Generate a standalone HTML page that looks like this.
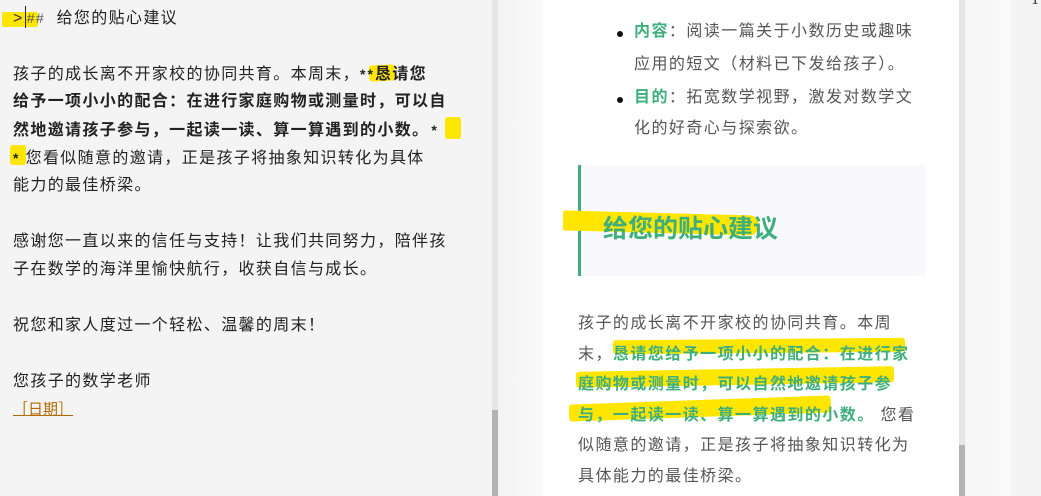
<!DOCTYPE html>
<html><head><meta charset="utf-8"><style>
*{margin:0;padding:0;box-sizing:border-box}
body{width:1041px;height:496px;overflow:hidden;position:relative;background:#f4f4f4;font-family:"Liberation Sans","Noto Sans CJK SC",sans-serif}
.hl{position:absolute;background:#ffe600;border-radius:3px}
#left{position:absolute;left:0;top:0;width:492px;height:496px;background:#f4f4f4;color:#222;font-size:16px;line-height:28px;padding:4px 0 0 13px;letter-spacing:1.35px}
#left .line{height:28px;white-space:nowrap;position:relative}
#left b{font-weight:bold;position:relative}
.sb1{position:absolute;left:492px;top:0;width:6px;height:496px;background:#e6e6e6}
.sb1 i{position:absolute;left:0;top:410px;width:6px;height:86px;background:#b3b3b3}
.gut{position:absolute;left:498px;top:0;width:45px;height:496px;background:linear-gradient(90deg,#f3f3f3,#fafafa)}
#page{position:absolute;left:543px;top:0;width:416px;height:496px;background:#fff;color:#555;font-size:16px;letter-spacing:1.45px}
.sb2{position:absolute;left:959px;top:0;width:6px;height:496px;background:#e6e6e6}
.sb2 i{position:absolute;left:0;top:445px;width:6px;height:51px;background:#b3b3b3}
.gut2{position:absolute;left:965px;top:0;width:46px;height:496px;background:linear-gradient(90deg,#f5f5f5,#fafafa)}
.g{color:#3eaf7c;font-weight:bold}
.li{position:absolute;left:91px;white-space:nowrap;line-height:33px}
.dot{position:absolute;left:74px;width:6px;height:6px;border-radius:50%;background:#111}
</style></head><body>
<div id="left">
 <div class="line"><span class="hl" style="left:-11px;top:8px;width:36px;height:15px;border-radius:2px"></span><span style="position:relative;color:#333">&gt;</span><span style="position:relative;display:inline-block;width:1px;height:22px;background:#222;vertical-align:-5px;margin:0 1px"></span><span style="position:relative;color:#555;font-size:14px">##</span>&nbsp; 给您的贴心建议</div>
 <div class="line"></div>
 <div class="line">孩子的成长离不开家校的协同共育。本周末，<span class="hl" style="left:356px;top:5px;width:26px;height:16px;transform:rotate(-3deg)"></span><span style="position:relative;font-size:14px;font-weight:bold;letter-spacing:2px">**</span><b>恳请您</b></div>
 <div class="line"><b>给予一项小小的配合：在进行家庭购物或测量时，可以自</b></div>
 <div class="line"><b>然地邀请孩子参与，一起读一读、算一算遇到的小数。</b><span class="hl" style="left:432px;top:1px;width:16px;height:22px"></span><span style="position:relative;font-size:14px;font-weight:bold;margin-left:2px">*</span></div>
 <div class="line"><span class="hl" style="left:-3px;top:1px;width:16px;height:20px"></span><span style="position:relative;font-size:14px;font-weight:bold">*</span> 您看似随意的邀请，正是孩子将抽象知识转化为具体</div>
 <div class="line">能力的最佳桥梁。</div>
 <div class="line"></div>
 <div class="line">感谢您一直以来的信任与支持！让我们共同努力，陪伴孩</div>
 <div class="line">子在数学的海洋里愉快航行，收获自信与成长。</div>
 <div class="line"></div>
 <div class="line">祝您和家人度过一个轻松、温馨的周末！</div>
 <div class="line"></div>
 <div class="line">您孩子的数学老师</div>
 <div class="line" style="color:#b36b00;font-size:15px;letter-spacing:0"><span style="text-decoration:underline">［日期］</span></div>
</div>
<div class="sb1"><i></i></div>
<div class="gut"></div>
<div id="page">
 <div class="dot" style="top:31px"></div>
 <div class="li" style="top:15px"><span class="g">内容</span>：阅读一篇关于小数历史或趣味</div>
 <div class="li" style="top:48px">应用的短文（材料已下发给孩子）。</div>
 <div class="dot" style="top:97px"></div>
 <div class="li" style="top:81px"><span class="g">目的</span>：拓宽数学视野，激发对数学文</div>
 <div class="li" style="top:112px">化的好奇心与探索欲。</div>
 <div style="position:absolute;left:35px;top:165px;width:348px;height:111px;background:#f9f9fd;border-left:3px solid #3eaf7c"></div>
 <div class="hl" style="left:20px;top:213px;width:195px;height:20px;transform:rotate(1.5deg);border-radius:2px 8px 8px 2px"></div>
 <div style="position:absolute;left:60px;top:213px;font-size:25px;font-weight:bold;color:#3eaf7c;white-space:nowrap;line-height:32px;letter-spacing:0">给您的贴心建议</div>
 <div class="hl" style="left:70px;top:339px;width:292px;height:14px;transform:rotate(-0.5deg)"></div>
 <div class="hl" style="left:33px;top:369px;width:318px;height:16px;transform:rotate(-1deg)"></div>
 <div class="hl" style="left:26px;top:400px;width:262px;height:17px;transform:rotate(-2deg)"></div>
 <div style="position:absolute;left:35px;top:309px;width:370px;line-height:30.5px;font-size:16px;color:#555">
  <div style="white-space:nowrap">孩子的成长离不开家校的协同共育。本周</div>
  <div style="white-space:nowrap;position:relative">末，<span class="g">恳请您给予一项小小的配合：在进行家</span></div>
  <div style="white-space:nowrap;position:relative"><span class="g">庭购物或测量时，可以自然地邀请孩子参</span></div>
  <div style="white-space:nowrap;position:relative"><span class="g">与，一起读一读、算一算遇到的小数。</span> 您看</div>
  <div style="white-space:nowrap">似随意的邀请，正是孩子将抽象知识转化为</div>
  <div style="white-space:nowrap">具体能力的最佳桥梁。</div>
 </div>
</div>
<div class="sb2"><i></i></div>
<div class="gut2"></div>
<div style="position:absolute;left:1031px;top:-9px;font-family:'Liberation Serif',serif;font-size:16px;color:#333">1</div>
</body></html>
